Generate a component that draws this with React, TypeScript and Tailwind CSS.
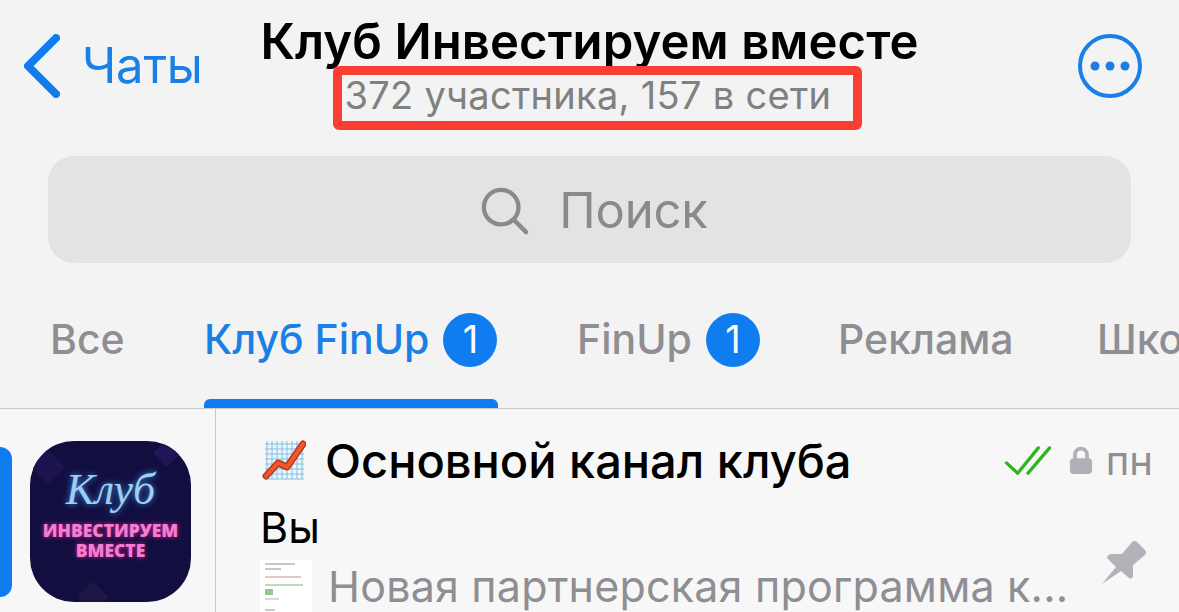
import React from 'react';

const tabs = [
  { label: "Все", width: "w-[73px] mr-[81px]", active: false, badge: false },
  { label: "Клуб FinUp", width: "w-[294px] mr-[79px]", active: true, badge: true },
  { label: "FinUp", width: "w-[182px] mr-[79px]", active: false, badge: true },
  { label: "Реклама", width: "w-[175px] mr-[84px]", active: false, badge: false },
  { label: "Школа", width: "w-[170px]", active: false, badge: false },
];

function ChartEmoji() {
  return (
    <svg width="44" height="44" viewBox="0 0 44 44" className="shrink-0">
      <rect x="3" y="2" width="39" height="38" fill="#eef6fb" />
      {[5, 10, 15, 20, 25, 30, 35, 40].map(v => (
        <g key={v} stroke="#7fbfe0" strokeWidth="1">
          <line x1={v} y1="2" x2={v} y2="40" />
          <line x1="3" y1={v} x2="42" y2={v} />
        </g>
      ))}
      <path d="M4 37 L16 24 L25 28 L41 5" fill="none" stroke="#b23a1c" strokeWidth="7" strokeLinecap="round" strokeLinejoin="round" />
      <path d="M4 37 L16 24 L25 28 L41 5" fill="none" stroke="#f4552a" strokeWidth="4" strokeLinecap="round" strokeLinejoin="round" />
    </svg>
  );
}

function ClubAvatar() {
  return (
    <div className="relative w-[161px] h-[161px] rounded-[44px] bg-[#120e40] shrink-0 overflow-hidden flex flex-col items-center">
      <div className="absolute left-[6px] top-[14px] w-[24px] h-[24px] rotate-45 bg-[#1c1350]" />
      <div className="absolute right-[14px] top-[2px] w-[20px] h-[20px] rotate-45 bg-[#221555]" />
      <div className="absolute left-[52px] bottom-[-6px] w-[22px] h-[22px] rotate-45 bg-[#1d1742]" />
      <div className="relative mt-[24px] h-[50px] text-[44px] leading-[50px] italic text-[#9ccdf2] [font-family:'Liberation_Serif',serif] [text-shadow:0_0_6px_#3f8fe0]">
        Клуб
      </div>
      <div className="relative mt-[5px] text-[17.5px] leading-[20px] font-extrabold text-[#f27fd2] text-center [font-family:'Open_Sans',sans-serif] [text-shadow:0_0_5px_#d9268f]">
        ИНВЕСТИРУЕМ
        <br />
        ВМЕСТЕ
      </div>
    </div>
  );
}

function Thumbnail() {
  return (
    <div className="w-[52px] h-[52px] bg-white shrink-0 flex flex-col gap-[3px] px-[5px] pt-[3px] overflow-hidden">
      <div className="h-[2px] w-[30px] bg-[#c8c8c8]" />
      <div className="h-[2px] w-[16px] bg-[#c8c8c8]" />
      <div className="h-[2px] w-[36px] bg-[#e6c9c4] mt-[3px]" />
      <div className="h-[2px] w-[38px] bg-[#bcd9b8] mt-[3px]" />
      <div className="h-[6px] w-[8px] bg-[#8fcb8a]" />
      <div className="h-[2px] w-[14px] bg-[#d8d8d8]" />
      <div className="h-[2px] w-[10px] bg-[#c8c8c8] mt-[6px]" />
    </div>
  );
}

export default function App() {
  return (
    <div className="w-[1179px] h-[612px] overflow-hidden bg-[#f7f7f7] text-black [font-family:Inter,'Noto_Sans',sans-serif]">
      <div className="bg-[#f3f3f3] h-[409px] border-b border-[#c8c8c8] flex flex-col">
        <div className="h-[156px] shrink-0 grid grid-cols-[1fr_auto_1fr]">
          <div className="flex items-start pl-[24px] pt-[34px] gap-[22px] text-[#1a80e5]">
            <svg width="36" height="64" viewBox="0 0 36 64" fill="none" stroke="#0f7cf0" strokeWidth="8" strokeLinecap="round" strokeLinejoin="round" className="shrink-0">
              <path d="M32 4 L4 32 L32 60" />
            </svg>
            <span className="text-[49px] leading-[64px] font-normal tracking-[-0.2px]">Чаты</span>
          </div>
          <div className="flex flex-col items-center pt-[13px]">
            <h1 className="text-[49px] leading-[57px] font-semibold tracking-[0.1px] whitespace-nowrap">Клуб Инвестируем вместе</h1>
            <div className="-mt-[4px] ml-[17px] w-[529px] h-[64px] border-[9px] border-[#fa3e33] rounded-[6px] flex items-center pl-[2px]">
              <span className="text-[#808080] text-[38px] leading-[44px] tracking-[0.3px] whitespace-nowrap pb-[7px]">372 участника, 157 в сети</span>
            </div>
          </div>
          <div className="flex justify-end items-start pr-[37px] pt-[34px]">
            <svg width="64" height="64" viewBox="0 0 64 64" fill="none">
              <circle cx="32" cy="32" r="30" stroke="#1a80e5" strokeWidth="4" />
              <circle cx="17" cy="32" r="4.5" fill="#1a80e5" />
              <circle cx="32" cy="32" r="4.5" fill="#1a80e5" />
              <circle cx="47" cy="32" r="4.5" fill="#1a80e5" />
            </svg>
          </div>
        </div>
        <div className="mx-[48px] h-[107px] shrink-0 rounded-[26px] bg-[#e3e3e3] flex items-center justify-center gap-[30px] pl-[10px] pt-[2px] text-[#8a8a8e]">
          <svg width="48" height="48" viewBox="0 0 50 50" fill="none" stroke="#8a8a8e" strokeWidth="4.5" strokeLinecap="round" className="shrink-0">
            <circle cx="21" cy="21" r="18" />
            <path d="M34 34 L47 47" />
          </svg>
          <span className="text-[49px] leading-[60px] tracking-[-0.2px]">Поиск</span>
        </div>
        <div className="flex-1 pl-[50px] flex items-stretch overflow-hidden whitespace-nowrap">
          {tabs.map(tab => (
            <div key={tab.label} className={`relative shrink-0 flex items-center gap-[14px] pt-[8px] ${tab.width}`}>
              <span className={`text-[41px] font-medium ${tab.active ? "text-[#1a80e5]" : "text-[#8e8e93]"}`}>{tab.label}</span>
              {tab.badge && (
                <span className="w-[54px] h-[54px] rounded-full bg-[#0f7cf0] text-white text-[38px] flex items-center justify-center shrink-0">1</span>
              )}
              {tab.active && <div className="absolute left-0 right-0 bottom-0 h-[9px] bg-[#0f7cf0] rounded-t-[6px]" />}
            </div>
          ))}
        </div>
      </div>

      <div className="flex h-[203px] overflow-hidden">
        <div className="w-[216px] shrink-0 border-r border-[#c8c8c8] flex items-start gap-[18px] pt-[32px]">
          <div className="w-[12px] h-[150px] mt-[6px] bg-[#0f7cf0] rounded-r-[12px] shrink-0" />
          <ClubAvatar />
        </div>
        <div className="flex-1 pl-[44px] pr-[26px] pt-[25px] min-w-0">
          <div className="flex items-center h-[54px] pl-[2px]">
            <ChartEmoji />
            <span className="ml-[19px] text-[47px] leading-[54px] font-medium whitespace-nowrap">Основной канал клуба</span>
            <svg width="48" height="30" viewBox="0 0 50 32" fill="none" stroke="#2fb51f" strokeWidth="3.5" strokeLinecap="round" strokeLinejoin="round" className="ml-auto shrink-0">
              <path d="M2 18 L14 29 L36 2" />
              <path d="M25 29 L48 2" />
            </svg>
            <svg width="24" height="30" viewBox="0 0 26 32" className="ml-[17px] shrink-0">
              <path d="M6.5 14 V9 a6.5 6.5 0 0 1 13 0 V14" fill="none" stroke="#b0b0b6" strokeWidth="4" />
              <rect x="1" y="13" width="24" height="17" rx="4" fill="#b0b0b6" />
            </svg>
            <span className="ml-[13px] text-[#8e8e93] text-[40px] leading-[44px]">пн</span>
          </div>
          <div className="text-[43px] leading-[48px] mt-[15px]">Вы</div>
          <div className="flex items-center relative mt-[9px]">
            <Thumbnail />
            <span className="ml-[16px] text-[#8e8e93] text-[43px] leading-[52px] tracking-[0.2px] whitespace-nowrap">Новая партнерская программа к...</span>
            <svg width="46" height="46" viewBox="0 0 46 46" className="absolute right-[6px] -top-[20px]">
              <path d="M1 44 L15 27 L6 18 Q6 15 10 14 L21 14 L31 2 Q33 0 36 2 L44 10 Q46 13 44 15 L32 25 L32 37 Q30 40 28 38 L20 31 Z" fill="#b2b2b8" />
            </svg>
          </div>
        </div>
      </div>
    </div>
  );
}
